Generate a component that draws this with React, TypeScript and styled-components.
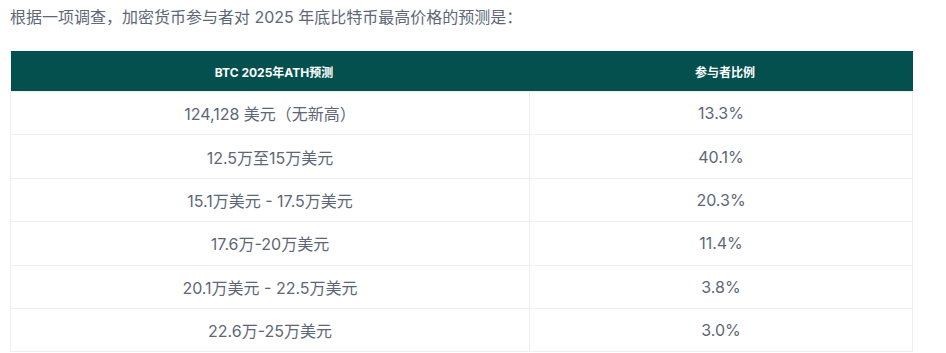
import styled, { createGlobalStyle } from 'styled-components';

const GlobalStyle = createGlobalStyle`
	html, body {
		margin: 0;
		padding: 0;
		background: #ffffff;
	}
	body {
		font-family: Inter, 'Noto Sans CJK SC', sans-serif;
	}
`;

interface Row {
	range: string;
	share: string;
}

const rows: Row[] = [
	{ range: '124,128 美元（无新高）', share: '13.3%' },
	{ range: '12.5万至15万美元', share: '40.1%' },
	{ range: '15.1万美元 - 17.5万美元', share: '20.3%' },
	{ range: '17.6万-20万美元', share: '11.4%' },
	{ range: '20.1万美元 - 22.5万美元', share: '3.8%' },
	{ range: '22.6万-25万美元', share: '3.0%' },
];

const App = () => (
	<Page>
		<GlobalStyle />
		<Intro>根据一项调查，加密货币参与者对 2025 年底比特币最高价格的预测是：</Intro>
		<Table>
			<colgroup>
				<col style={{ width: 519 }} />
				<col />
			</colgroup>
			<thead>
				<tr>
					<HeadCell>BTC 2025年ATH预测</HeadCell>
					<HeadCell>参与者比例</HeadCell>
				</tr>
			</thead>
			<tbody>
				{rows.map((row) => (
					<BodyRow key={row.range}>
						<Cell>{row.range}</Cell>
						<Cell>{row.share}</Cell>
					</BodyRow>
				))}
			</tbody>
		</Table>
	</Page>
);

export default App;

const Page = styled.div`
	padding: 5px 10px 0;
	width: 903px;
`;

const Intro = styled.p`
	margin: 0 0 22px;
	font-size: 16px;
	line-height: 24px;
	color: #5d6778;
	font-family: Inter, 'Noto Sans CJK SC', sans-serif;
`;

const Table = styled.table`
	width: 903px;
	border-collapse: collapse;
	table-layout: fixed;
`;

const HeadCell = styled.th`
	height: 40px;
	padding: 0 10px 0 18px;
	background: #03504e;
	color: #ffffff;
	font-size: 12px;
	font-weight: 700;
	text-align: center;
	font-family: Inter, 'Noto Sans CJK SC', sans-serif;
`;

const BodyRow = styled.tr`
	height: 43.4px;
`;

const Cell = styled.td`
	padding: 0 12px;
	border: 1px solid #efefef;
	text-align: center;
	font-size: 16px;
	color: #5d6778;
	font-family: Inter, 'Noto Sans CJK SC', sans-serif;
`;
